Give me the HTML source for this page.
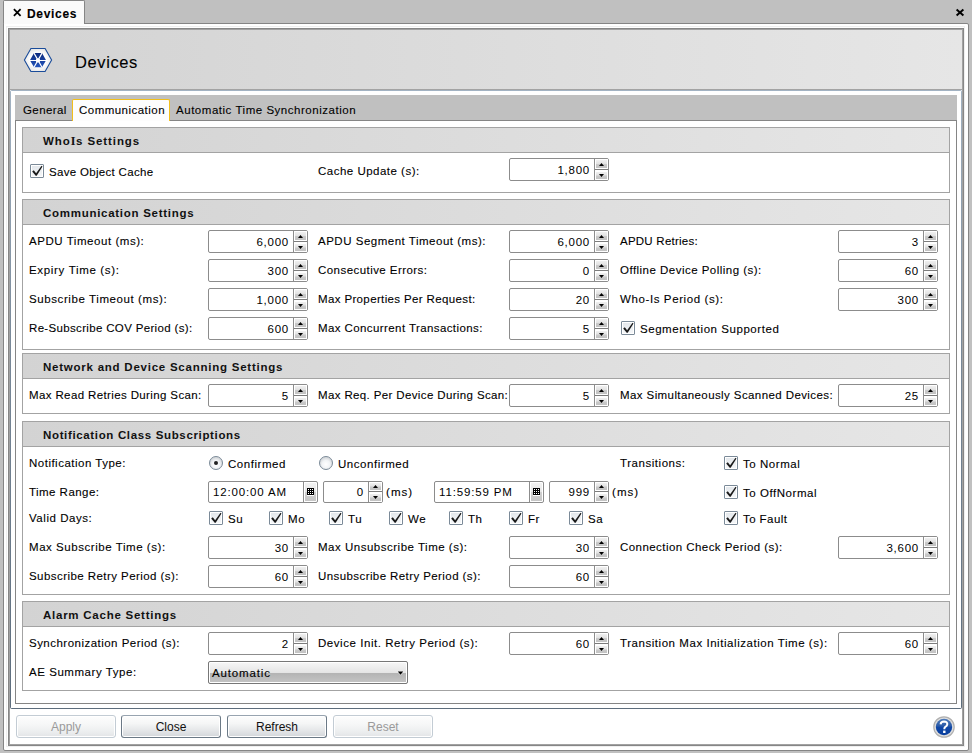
<!DOCTYPE html><html><head><meta charset="utf-8"><style>
*{box-sizing:content-box}
html,body{margin:0;padding:0}
body{width:972px;height:753px;overflow:hidden;background:#c0c0c0;position:relative;font-family:"Liberation Sans",sans-serif;font-size:12px;color:#000}
div,svg{position:absolute}
.lbl{white-space:nowrap;line-height:14px;letter-spacing:0.55px;font-size:11.5px;-webkit-text-stroke:0.1px #000}
.doctab{left:3px;top:0;width:80px;height:24px;background:#f9f9f9;border:1px solid #858585;border-bottom:none;border-radius:2px 2px 0 0}
.frame{left:3px;top:23px;width:964px;height:726px;border:1px solid #858585;background:#fff;border-radius:0 2px 2px 2px}
.frame2{left:8px;top:28px;width:954px;height:716px;border:1px solid #868686;box-shadow:inset 0 0 0 1px #a2a2a2;background:#fff}
.hdr{left:10px;top:30px;width:952px;height:59px;background:linear-gradient(to right,#d3d3d3,#e6e6e6);border-bottom:1px solid #a3a3a3}
.tabctl{left:10px;top:90px;width:952px;height:619px;border-radius:2px;background:linear-gradient(#a3b3c3,#7a8a9a 40%,#5d6d7d)}
.tabctl:after{content:'';position:absolute;left:1px;top:1px;width:950px;height:617px;background:#fff}
.tabstrip{left:15px;top:95px;width:942px;height:25px;background:#c0c0c0}
.tabsel{left:72px;top:99px;width:96px;height:21px;background:#fdfdfd;border:1px solid #f2bf1a;border-bottom:none;border-radius:2px 2px 0 0}
.page{left:15px;top:120px;width:940px;height:582px;border:1px solid #858585;background:#fff}
.grp{left:22px;width:926px;border:1px solid #a3a3a3;background:#fff}
.gh{left:0;top:0;width:926px;height:24px;border-bottom:1px solid #a3a3a3;background:linear-gradient(to right,#d3d3d3,#e6e6e6)}
.gh span{position:absolute;left:20px;top:6px;line-height:14px;font-weight:bold;font-size:11.5px;letter-spacing:0.6px;color:#111;white-space:nowrap}
.spin{height:21px;border:1px solid #8c8c8c;border-radius:2px;background:#fff}
.sv{left:0;top:4px;text-align:right;line-height:14px;letter-spacing:0.75px;font-size:11.5px}
.sdiv{top:0;width:1px;height:21px;background:#8c8c8c}
.sup,.sdn{width:11px;height:8px;border:1px solid #fff;background:linear-gradient(#f0f0f0 0,#e2e2e2 48%,#cacaca 52%,#c2c2c2 100%)}
.sup{top:1px}.sdn{top:12px;height:7px}
.ssep{top:10px;width:13px;height:1px;background:#7c7c7c}
.sup i,.sdn i{position:absolute;left:3px;width:0;height:0;border-left:2.5px solid transparent;border-right:2.5px solid transparent}
.sup i{top:2px;border-bottom:3px solid #000}
.sdn i{top:2px;border-top:3px solid #000}
.chk{width:12px;height:12px;border:1px solid #7b8a98;border-radius:1px;background:#fff}
.chk:before{content:"";position:absolute;left:1px;top:1px;width:10px;height:10px;background:linear-gradient(#e4e8ec,#f4f6f8)}
.chk svg{left:-1px;top:-1px}
.rad{position:absolute}
.tp{width:108px;height:20px;border:1px solid #8c8c8c;border-radius:2px;background:#fff}
.tv{left:4px;top:3px;line-height:14px;letter-spacing:0.85px;white-space:nowrap;font-size:11.5px}
.tdiv{left:94px;top:0;width:1px;height:20px;background:#8c8c8c}
.tbtn{left:96px;top:1px;width:11px;height:18px;background:linear-gradient(#f2f2f2 0,#e6e6e6 50%,#cfcfcf 50%,#c6c6c6 100%)}
.cal{left:2px;top:5px;width:7px;height:8px;background:#fff}
.cal svg{left:0;top:0}
.btn{top:715px;width:98px;height:21px;border:1px solid #6b7986;border-top-color:#98a4b0;border-radius:3px;background:linear-gradient(#fdfdfd 0,#f5f6f6 35%,#e4e6e8 70%,#d3d6da 100%);box-shadow:inset 0 0 0 1px #fff;text-align:center;line-height:23px;color:#111;letter-spacing:0}
.btn.dis{border-color:#c3ccd4;color:#9a9a9a;background:linear-gradient(#fdfdfd 0,#f6f7f7 40%,#eceeef 75%,#e2e4e7 100%)}
.dd{left:208px;top:661px;width:198px;height:21px;border:1px solid #777;border-radius:2px;background:linear-gradient(#f7f7f7 0,#e5e5e5 50%,#b3b3b3 52%,#c5c5c5 100%);box-shadow:inset 0 0 0 1px #fff}
</style></head><body>

<div class="doctab"></div>
<div class="frame"></div>
<div style="left:6px;top:26px;width:957px;height:719px;border:1px solid #efefef"></div>
<div style="left:4px;top:1px;width:80px;height:23px;background:#fafafa;border-radius:1px 1px 0 0"></div>
<svg style="left:13px;top:8px" width="9" height="9" viewBox="0 0 9 9"><path d="M0.9 1.1 L7.6 7.9 M7.6 1.1 L0.9 7.9" stroke="#000" stroke-width="1.75"/></svg>
<div class="lbl" style="left:27px;top:7px;font-weight:bold;font-size:12px;letter-spacing:0.68px;">Devices</div>
<svg style="left:955px;top:8px" width="10" height="9" viewBox="0 0 10 9"><path d="M1.6 1.6 L8.4 7.4 M8.4 1.6 L1.6 7.4" stroke="#000" stroke-width="2"/></svg>
<div class="frame2"></div>
<div class="hdr"></div>
<svg style="left:22px;top:46px" width="32" height="28" viewBox="0 0 32 28">
<defs><linearGradient id="ig" x1="0" y1="0" x2="0" y2="1"><stop offset="0" stop-color="#0b2a7e"/><stop offset="1" stop-color="#2556bd"/></linearGradient>
<radialGradient id="sh" cx="50%" cy="50%" r="50%"><stop offset="0.6" stop-color="#fff"/><stop offset="1" stop-color="#e8e8e8"/></radialGradient></defs>
<polygon points="2.4,14 8.9,2.5 23.1,2.5 29.6,14 23.1,25.5 8.9,25.5" fill="url(#sh)" stroke="#1a4c9a" stroke-width="1.1"/>
<polygon points="7.9,14.3 12,7.1 20,7.1 24.1,14.3 20,21.3 12,21.3" fill="url(#ig)"/>
<path d="M12 7.1 L20 21.3 M20 7.1 L12 21.3" stroke="#fff" stroke-width="1.2"/><rect x="7" y="14" width="18" height="1" fill="#fff"/>
<circle cx="16" cy="14.4" r="2.2" fill="#fff"/>
</svg>
<div class="lbl" style="left:75px;top:53px;font-size:16.5px;line-height:18px;letter-spacing:0.6px">Devices</div>
<div class="tabctl"></div>
<div class="tabstrip"></div>
<div class="page"></div>
<div class="tabsel"></div>
<div class="lbl" style="left:23px;top:103px;;letter-spacing:0.407px;">General</div>
<div class="lbl" style="left:79px;top:103px;;letter-spacing:0.473px;">Communication</div>
<div class="lbl" style="left:176px;top:103px;letter-spacing:0.53px;letter-spacing:0.53px;">Automatic Time Synchronization</div>
<div class="grp" style="top:127px;height:64px"><div class="gh"><span style="letter-spacing:0.92px">Who<span style="position:static;font-family:Liberation Serif;font-size:12px">I</span>s Settings</span></div></div>
<div class="grp" style="top:199px;height:149px"><div class="gh"><span style="letter-spacing:0.72px">Communication Settings</span></div></div>
<div class="grp" style="top:353px;height:59px"><div class="gh"><span style="letter-spacing:0.76px">Network and Device Scanning Settings</span></div></div>
<div class="grp" style="top:421px;height:172px"><div class="gh"><span style="letter-spacing:0.65px">Notification Class Subscriptions</span></div></div>
<div class="grp" style="top:601px;height:88px"><div class="gh"><span style="letter-spacing:0.75px">Alarm Cache Settings</span></div></div>
<div class="chk" style="left:30px;top:164px"><svg width="14" height="14" viewBox="0 0 14 14"><polygon points="2.2,7.4 3.8,6.3 6.1,9.2 11.6,1.8 12.5,2.4 6.7,11.7 5.7,11.7" fill="#1a1a1a"/></svg></div>
<div class="lbl" style="left:49px;top:165px;;letter-spacing:0.315px;">Save Object Cache</div>
<div class="lbl" style="left:318px;top:164px;;letter-spacing:0.491px;">Cache Update (s):</div>
<div class="spin" style="left:509px;top:158px;width:98px;height:21px"><div class="sv" style="width:80px;top:4px">1,800</div><div class="sdiv" style="left:84px;height:21px"></div><div class="sup" style="left:85px;top:0px;height:8px"><svg style="left:3px;top:3px" width="5" height="3"><polygon points="0,3 2.5,0 5,3" fill="#000"/></svg></div><div class="ssep" style="left:85px;top:10px"></div><div class="sdn" style="left:85px;top:12px;height:7px"><svg style="left:3px;top:2px" width="5" height="3"><polygon points="0,0 5,0 2.5,3" fill="#000"/></svg></div></div>
<div class="lbl" style="left:29px;top:234px;;">APDU Timeout (ms):</div>
<div class="spin" style="left:208px;top:230px;width:98px;height:21px"><div class="sv" style="width:80px;top:4px">6,000</div><div class="sdiv" style="left:84px;height:21px"></div><div class="sup" style="left:85px;top:0px;height:8px"><svg style="left:3px;top:3px" width="5" height="3"><polygon points="0,3 2.5,0 5,3" fill="#000"/></svg></div><div class="ssep" style="left:85px;top:10px"></div><div class="sdn" style="left:85px;top:12px;height:7px"><svg style="left:3px;top:2px" width="5" height="3"><polygon points="0,0 5,0 2.5,3" fill="#000"/></svg></div></div>
<div class="lbl" style="left:318px;top:234px;;letter-spacing:0.512px;">APDU Segment Timeout (ms):</div>
<div class="spin" style="left:509px;top:230px;width:98px;height:21px"><div class="sv" style="width:80px;top:4px">6,000</div><div class="sdiv" style="left:84px;height:21px"></div><div class="sup" style="left:85px;top:0px;height:8px"><svg style="left:3px;top:3px" width="5" height="3"><polygon points="0,3 2.5,0 5,3" fill="#000"/></svg></div><div class="ssep" style="left:85px;top:10px"></div><div class="sdn" style="left:85px;top:12px;height:7px"><svg style="left:3px;top:2px" width="5" height="3"><polygon points="0,0 5,0 2.5,3" fill="#000"/></svg></div></div>
<div class="lbl" style="left:620px;top:234px;;letter-spacing:0.242px;">APDU Retries:</div>
<div class="spin" style="left:838px;top:230px;width:98px;height:21px"><div class="sv" style="width:80px;top:4px">3</div><div class="sdiv" style="left:84px;height:21px"></div><div class="sup" style="left:85px;top:0px;height:8px"><svg style="left:3px;top:3px" width="5" height="3"><polygon points="0,3 2.5,0 5,3" fill="#000"/></svg></div><div class="ssep" style="left:85px;top:10px"></div><div class="sdn" style="left:85px;top:12px;height:7px"><svg style="left:3px;top:2px" width="5" height="3"><polygon points="0,0 5,0 2.5,3" fill="#000"/></svg></div></div>
<div class="lbl" style="left:29px;top:263px;;letter-spacing:0.675px;">Expiry Time (s):</div>
<div class="spin" style="left:208px;top:259px;width:98px;height:21px"><div class="sv" style="width:80px;top:4px">300</div><div class="sdiv" style="left:84px;height:21px"></div><div class="sup" style="left:85px;top:0px;height:8px"><svg style="left:3px;top:3px" width="5" height="3"><polygon points="0,3 2.5,0 5,3" fill="#000"/></svg></div><div class="ssep" style="left:85px;top:10px"></div><div class="sdn" style="left:85px;top:12px;height:7px"><svg style="left:3px;top:2px" width="5" height="3"><polygon points="0,0 5,0 2.5,3" fill="#000"/></svg></div></div>
<div class="lbl" style="left:318px;top:263px;;letter-spacing:0.445px;">Consecutive Errors:</div>
<div class="spin" style="left:509px;top:259px;width:98px;height:21px"><div class="sv" style="width:80px;top:4px">0</div><div class="sdiv" style="left:84px;height:21px"></div><div class="sup" style="left:85px;top:0px;height:8px"><svg style="left:3px;top:3px" width="5" height="3"><polygon points="0,3 2.5,0 5,3" fill="#000"/></svg></div><div class="ssep" style="left:85px;top:10px"></div><div class="sdn" style="left:85px;top:12px;height:7px"><svg style="left:3px;top:2px" width="5" height="3"><polygon points="0,0 5,0 2.5,3" fill="#000"/></svg></div></div>
<div class="lbl" style="left:620px;top:263px;;letter-spacing:0.476px;">Offline Device Polling (s):</div>
<div class="spin" style="left:838px;top:259px;width:98px;height:21px"><div class="sv" style="width:80px;top:4px">60</div><div class="sdiv" style="left:84px;height:21px"></div><div class="sup" style="left:85px;top:0px;height:8px"><svg style="left:3px;top:3px" width="5" height="3"><polygon points="0,3 2.5,0 5,3" fill="#000"/></svg></div><div class="ssep" style="left:85px;top:10px"></div><div class="sdn" style="left:85px;top:12px;height:7px"><svg style="left:3px;top:2px" width="5" height="3"><polygon points="0,0 5,0 2.5,3" fill="#000"/></svg></div></div>
<div class="lbl" style="left:29px;top:292px;;letter-spacing:0.593px;">Subscribe Timeout (ms):</div>
<div class="spin" style="left:208px;top:288px;width:98px;height:21px"><div class="sv" style="width:80px;top:4px">1,000</div><div class="sdiv" style="left:84px;height:21px"></div><div class="sup" style="left:85px;top:0px;height:8px"><svg style="left:3px;top:3px" width="5" height="3"><polygon points="0,3 2.5,0 5,3" fill="#000"/></svg></div><div class="ssep" style="left:85px;top:10px"></div><div class="sdn" style="left:85px;top:12px;height:7px"><svg style="left:3px;top:2px" width="5" height="3"><polygon points="0,0 5,0 2.5,3" fill="#000"/></svg></div></div>
<div class="lbl" style="left:318px;top:292px;;letter-spacing:0.365px;">Max Properties Per Request:</div>
<div class="spin" style="left:509px;top:288px;width:98px;height:21px"><div class="sv" style="width:80px;top:4px">20</div><div class="sdiv" style="left:84px;height:21px"></div><div class="sup" style="left:85px;top:0px;height:8px"><svg style="left:3px;top:3px" width="5" height="3"><polygon points="0,3 2.5,0 5,3" fill="#000"/></svg></div><div class="ssep" style="left:85px;top:10px"></div><div class="sdn" style="left:85px;top:12px;height:7px"><svg style="left:3px;top:2px" width="5" height="3"><polygon points="0,0 5,0 2.5,3" fill="#000"/></svg></div></div>
<div class="lbl" style="left:620px;top:292px;;letter-spacing:0.606px;">Who-Is Period (s):</div>
<div class="spin" style="left:838px;top:288px;width:98px;height:21px"><div class="sv" style="width:80px;top:4px">300</div><div class="sdiv" style="left:84px;height:21px"></div><div class="sup" style="left:85px;top:0px;height:8px"><svg style="left:3px;top:3px" width="5" height="3"><polygon points="0,3 2.5,0 5,3" fill="#000"/></svg></div><div class="ssep" style="left:85px;top:10px"></div><div class="sdn" style="left:85px;top:12px;height:7px"><svg style="left:3px;top:2px" width="5" height="3"><polygon points="0,0 5,0 2.5,3" fill="#000"/></svg></div></div>
<div class="lbl" style="left:29px;top:321px;;letter-spacing:0.336px;">Re-Subscribe COV Period (s):</div>
<div class="spin" style="left:208px;top:317px;width:98px;height:21px"><div class="sv" style="width:80px;top:4px">600</div><div class="sdiv" style="left:84px;height:21px"></div><div class="sup" style="left:85px;top:0px;height:8px"><svg style="left:3px;top:3px" width="5" height="3"><polygon points="0,3 2.5,0 5,3" fill="#000"/></svg></div><div class="ssep" style="left:85px;top:10px"></div><div class="sdn" style="left:85px;top:12px;height:7px"><svg style="left:3px;top:2px" width="5" height="3"><polygon points="0,0 5,0 2.5,3" fill="#000"/></svg></div></div>
<div class="lbl" style="left:318px;top:321px;;letter-spacing:0.407px;">Max Concurrent Transactions:</div>
<div class="spin" style="left:509px;top:317px;width:98px;height:21px"><div class="sv" style="width:80px;top:4px">5</div><div class="sdiv" style="left:84px;height:21px"></div><div class="sup" style="left:85px;top:0px;height:8px"><svg style="left:3px;top:3px" width="5" height="3"><polygon points="0,3 2.5,0 5,3" fill="#000"/></svg></div><div class="ssep" style="left:85px;top:10px"></div><div class="sdn" style="left:85px;top:12px;height:7px"><svg style="left:3px;top:2px" width="5" height="3"><polygon points="0,0 5,0 2.5,3" fill="#000"/></svg></div></div>
<div class="chk" style="left:621px;top:321px"><svg width="14" height="14" viewBox="0 0 14 14"><polygon points="2.2,7.4 3.8,6.3 6.1,9.2 11.6,1.8 12.5,2.4 6.7,11.7 5.7,11.7" fill="#1a1a1a"/></svg></div>
<div class="lbl" style="left:640px;top:322px;;">Segmentation Supported</div>
<div class="lbl" style="left:29px;top:388px;;letter-spacing:0.378px;">Max Read Retries During Scan:</div>
<div class="spin" style="left:208px;top:384px;width:98px;height:21px"><div class="sv" style="width:80px;top:4px">5</div><div class="sdiv" style="left:84px;height:21px"></div><div class="sup" style="left:85px;top:0px;height:8px"><svg style="left:3px;top:3px" width="5" height="3"><polygon points="0,3 2.5,0 5,3" fill="#000"/></svg></div><div class="ssep" style="left:85px;top:10px"></div><div class="sdn" style="left:85px;top:12px;height:7px"><svg style="left:3px;top:2px" width="5" height="3"><polygon points="0,0 5,0 2.5,3" fill="#000"/></svg></div></div>
<div class="lbl" style="left:318px;top:388px;;letter-spacing:0.369px;">Max Req. Per Device During Scan:</div>
<div class="spin" style="left:509px;top:384px;width:98px;height:21px"><div class="sv" style="width:80px;top:4px">5</div><div class="sdiv" style="left:84px;height:21px"></div><div class="sup" style="left:85px;top:0px;height:8px"><svg style="left:3px;top:3px" width="5" height="3"><polygon points="0,3 2.5,0 5,3" fill="#000"/></svg></div><div class="ssep" style="left:85px;top:10px"></div><div class="sdn" style="left:85px;top:12px;height:7px"><svg style="left:3px;top:2px" width="5" height="3"><polygon points="0,0 5,0 2.5,3" fill="#000"/></svg></div></div>
<div class="lbl" style="left:620px;top:388px;letter-spacing:0.47px;letter-spacing:0.407px;">Max Simultaneously Scanned Devices:</div>
<div class="spin" style="left:838px;top:384px;width:98px;height:21px"><div class="sv" style="width:80px;top:4px">25</div><div class="sdiv" style="left:84px;height:21px"></div><div class="sup" style="left:85px;top:0px;height:8px"><svg style="left:3px;top:3px" width="5" height="3"><polygon points="0,3 2.5,0 5,3" fill="#000"/></svg></div><div class="ssep" style="left:85px;top:10px"></div><div class="sdn" style="left:85px;top:12px;height:7px"><svg style="left:3px;top:2px" width="5" height="3"><polygon points="0,0 5,0 2.5,3" fill="#000"/></svg></div></div>
<div class="lbl" style="left:29px;top:456px;;letter-spacing:0.494px;">Notification Type:</div>
<svg class="rad" style="left:209px;top:456px" width="15" height="15" viewBox="0 0 15 15"><defs><radialGradient id="rg209" cx="50%" cy="60%" r="50%"><stop offset="0" stop-color="#ffffff"/><stop offset="0.6" stop-color="#f2f4f6"/><stop offset="1" stop-color="#d6d9dc"/></radialGradient></defs><circle cx="7" cy="7" r="6.5" fill="url(#rg209)" stroke="#7b8a98" stroke-width="1"/><circle cx="7" cy="7" r="2" fill="#222"/></svg>
<div class="lbl" style="left:228px;top:457px;;">Confirmed</div>
<svg class="rad" style="left:319px;top:456px" width="15" height="15" viewBox="0 0 15 15"><defs><radialGradient id="rg319" cx="50%" cy="60%" r="50%"><stop offset="0" stop-color="#ffffff"/><stop offset="0.6" stop-color="#f2f4f6"/><stop offset="1" stop-color="#d6d9dc"/></radialGradient></defs><circle cx="7" cy="7" r="6.5" fill="url(#rg319)" stroke="#7b8a98" stroke-width="1"/></svg>
<div class="lbl" style="left:338px;top:457px;;">Unconfirmed</div>
<div class="lbl" style="left:620px;top:456px;;">Transitions:</div>
<div class="chk" style="left:724px;top:456px"><svg width="14" height="14" viewBox="0 0 14 14"><polygon points="2.2,7.4 3.8,6.3 6.1,9.2 11.6,1.8 12.5,2.4 6.7,11.7 5.7,11.7" fill="#1a1a1a"/></svg></div>
<div class="lbl" style="left:743px;top:457px;;">To Normal</div>
<div class="lbl" style="left:29px;top:485px;;letter-spacing:0.459px;">Time Range:</div>
<div class="tp" style="left:208px;top:481px"><div class="tv">12:00:00 AM</div><div class="tdiv"></div><div class="tbtn"><div class="cal"><svg width="7" height="7" viewBox="0 0 7 7"><rect width="7" height="7" fill="#000"/><rect x="1" y="1" width="1" height="1" fill="#fff"/><rect x="1" y="3" width="1" height="1" fill="#fff"/><rect x="1" y="5" width="1" height="1" fill="#fff"/><rect x="3" y="1" width="1" height="1" fill="#fff"/><rect x="3" y="3" width="1" height="1" fill="#fff"/><rect x="3" y="5" width="1" height="1" fill="#fff"/><rect x="5" y="1" width="1" height="1" fill="#fff"/><rect x="5" y="3" width="1" height="1" fill="#fff"/><rect x="5" y="5" width="1" height="1" fill="#fff"/></svg></div></div></div>
<div class="spin" style="left:323px;top:481px;width:58px;height:20px"><div class="sv" style="width:40px;top:3px">0</div><div class="sdiv" style="left:44px;height:20px"></div><div class="sup" style="left:45px;top:0px;height:7px"><svg style="left:3px;top:2px" width="5" height="3"><polygon points="0,3 2.5,0 5,3" fill="#000"/></svg></div><div class="ssep" style="left:45px;top:9px"></div><div class="sdn" style="left:45px;top:11px;height:7px"><svg style="left:3px;top:2px" width="5" height="3"><polygon points="0,0 5,0 2.5,3" fill="#000"/></svg></div></div>
<div class="lbl" style="left:386px;top:485px;;letter-spacing:1.05px;">(ms)</div>
<div class="tp" style="left:434px;top:481px"><div class="tv">11:59:59 PM</div><div class="tdiv"></div><div class="tbtn"><div class="cal"><svg width="7" height="7" viewBox="0 0 7 7"><rect width="7" height="7" fill="#000"/><rect x="1" y="1" width="1" height="1" fill="#fff"/><rect x="1" y="3" width="1" height="1" fill="#fff"/><rect x="1" y="5" width="1" height="1" fill="#fff"/><rect x="3" y="1" width="1" height="1" fill="#fff"/><rect x="3" y="3" width="1" height="1" fill="#fff"/><rect x="3" y="5" width="1" height="1" fill="#fff"/><rect x="5" y="1" width="1" height="1" fill="#fff"/><rect x="5" y="3" width="1" height="1" fill="#fff"/><rect x="5" y="5" width="1" height="1" fill="#fff"/></svg></div></div></div>
<div class="spin" style="left:549px;top:481px;width:58px;height:20px"><div class="sv" style="width:40px;top:3px">999</div><div class="sdiv" style="left:44px;height:20px"></div><div class="sup" style="left:45px;top:0px;height:7px"><svg style="left:3px;top:2px" width="5" height="3"><polygon points="0,3 2.5,0 5,3" fill="#000"/></svg></div><div class="ssep" style="left:45px;top:9px"></div><div class="sdn" style="left:45px;top:11px;height:7px"><svg style="left:3px;top:2px" width="5" height="3"><polygon points="0,0 5,0 2.5,3" fill="#000"/></svg></div></div>
<div class="lbl" style="left:612px;top:485px;;letter-spacing:1.05px;">(ms)</div>
<div class="chk" style="left:724px;top:485px"><svg width="14" height="14" viewBox="0 0 14 14"><polygon points="2.2,7.4 3.8,6.3 6.1,9.2 11.6,1.8 12.5,2.4 6.7,11.7 5.7,11.7" fill="#1a1a1a"/></svg></div>
<div class="lbl" style="left:743px;top:486px;;">To OffNormal</div>
<div class="lbl" style="left:29px;top:511px;;">Valid Days:</div>
<div class="chk" style="left:209px;top:511px"><svg width="14" height="14" viewBox="0 0 14 14"><polygon points="2.2,7.4 3.8,6.3 6.1,9.2 11.6,1.8 12.5,2.4 6.7,11.7 5.7,11.7" fill="#1a1a1a"/></svg></div>
<div class="lbl" style="left:228px;top:512px;;">Su</div>
<div class="chk" style="left:269px;top:511px"><svg width="14" height="14" viewBox="0 0 14 14"><polygon points="2.2,7.4 3.8,6.3 6.1,9.2 11.6,1.8 12.5,2.4 6.7,11.7 5.7,11.7" fill="#1a1a1a"/></svg></div>
<div class="lbl" style="left:288px;top:512px;;">Mo</div>
<div class="chk" style="left:329px;top:511px"><svg width="14" height="14" viewBox="0 0 14 14"><polygon points="2.2,7.4 3.8,6.3 6.1,9.2 11.6,1.8 12.5,2.4 6.7,11.7 5.7,11.7" fill="#1a1a1a"/></svg></div>
<div class="lbl" style="left:348px;top:512px;;">Tu</div>
<div class="chk" style="left:389px;top:511px"><svg width="14" height="14" viewBox="0 0 14 14"><polygon points="2.2,7.4 3.8,6.3 6.1,9.2 11.6,1.8 12.5,2.4 6.7,11.7 5.7,11.7" fill="#1a1a1a"/></svg></div>
<div class="lbl" style="left:408px;top:512px;;">We</div>
<div class="chk" style="left:449px;top:511px"><svg width="14" height="14" viewBox="0 0 14 14"><polygon points="2.2,7.4 3.8,6.3 6.1,9.2 11.6,1.8 12.5,2.4 6.7,11.7 5.7,11.7" fill="#1a1a1a"/></svg></div>
<div class="lbl" style="left:468px;top:512px;;">Th</div>
<div class="chk" style="left:509px;top:511px"><svg width="14" height="14" viewBox="0 0 14 14"><polygon points="2.2,7.4 3.8,6.3 6.1,9.2 11.6,1.8 12.5,2.4 6.7,11.7 5.7,11.7" fill="#1a1a1a"/></svg></div>
<div class="lbl" style="left:528px;top:512px;;">Fr</div>
<div class="chk" style="left:569px;top:511px"><svg width="14" height="14" viewBox="0 0 14 14"><polygon points="2.2,7.4 3.8,6.3 6.1,9.2 11.6,1.8 12.5,2.4 6.7,11.7 5.7,11.7" fill="#1a1a1a"/></svg></div>
<div class="lbl" style="left:588px;top:512px;;">Sa</div>
<div class="chk" style="left:724px;top:511px"><svg width="14" height="14" viewBox="0 0 14 14"><polygon points="2.2,7.4 3.8,6.3 6.1,9.2 11.6,1.8 12.5,2.4 6.7,11.7 5.7,11.7" fill="#1a1a1a"/></svg></div>
<div class="lbl" style="left:743px;top:512px;;letter-spacing:0.425px;">To Fault</div>
<div class="lbl" style="left:29px;top:540px;;">Max Subscribe Time (s):</div>
<div class="spin" style="left:208px;top:536px;width:98px;height:21px"><div class="sv" style="width:80px;top:4px">30</div><div class="sdiv" style="left:84px;height:21px"></div><div class="sup" style="left:85px;top:0px;height:8px"><svg style="left:3px;top:3px" width="5" height="3"><polygon points="0,3 2.5,0 5,3" fill="#000"/></svg></div><div class="ssep" style="left:85px;top:10px"></div><div class="sdn" style="left:85px;top:12px;height:7px"><svg style="left:3px;top:2px" width="5" height="3"><polygon points="0,0 5,0 2.5,3" fill="#000"/></svg></div></div>
<div class="lbl" style="left:318px;top:540px;;letter-spacing:0.51px;">Max Unsubscribe Time (s):</div>
<div class="spin" style="left:509px;top:536px;width:98px;height:21px"><div class="sv" style="width:80px;top:4px">30</div><div class="sdiv" style="left:84px;height:21px"></div><div class="sup" style="left:85px;top:0px;height:8px"><svg style="left:3px;top:3px" width="5" height="3"><polygon points="0,3 2.5,0 5,3" fill="#000"/></svg></div><div class="ssep" style="left:85px;top:10px"></div><div class="sdn" style="left:85px;top:12px;height:7px"><svg style="left:3px;top:2px" width="5" height="3"><polygon points="0,0 5,0 2.5,3" fill="#000"/></svg></div></div>
<div class="lbl" style="left:620px;top:540px;;letter-spacing:0.443px;">Connection Check Period (s):</div>
<div class="spin" style="left:838px;top:536px;width:98px;height:21px"><div class="sv" style="width:80px;top:4px">3,600</div><div class="sdiv" style="left:84px;height:21px"></div><div class="sup" style="left:85px;top:0px;height:8px"><svg style="left:3px;top:3px" width="5" height="3"><polygon points="0,3 2.5,0 5,3" fill="#000"/></svg></div><div class="ssep" style="left:85px;top:10px"></div><div class="sdn" style="left:85px;top:12px;height:7px"><svg style="left:3px;top:2px" width="5" height="3"><polygon points="0,0 5,0 2.5,3" fill="#000"/></svg></div></div>
<div class="lbl" style="left:29px;top:569px;;letter-spacing:0.439px;">Subscribe Retry Period (s):</div>
<div class="spin" style="left:208px;top:565px;width:98px;height:21px"><div class="sv" style="width:80px;top:4px">60</div><div class="sdiv" style="left:84px;height:21px"></div><div class="sup" style="left:85px;top:0px;height:8px"><svg style="left:3px;top:3px" width="5" height="3"><polygon points="0,3 2.5,0 5,3" fill="#000"/></svg></div><div class="ssep" style="left:85px;top:10px"></div><div class="sdn" style="left:85px;top:12px;height:7px"><svg style="left:3px;top:2px" width="5" height="3"><polygon points="0,0 5,0 2.5,3" fill="#000"/></svg></div></div>
<div class="lbl" style="left:318px;top:569px;;letter-spacing:0.413px;">Unsubscribe Retry Period (s):</div>
<div class="spin" style="left:509px;top:565px;width:98px;height:21px"><div class="sv" style="width:80px;top:4px">60</div><div class="sdiv" style="left:84px;height:21px"></div><div class="sup" style="left:85px;top:0px;height:8px"><svg style="left:3px;top:3px" width="5" height="3"><polygon points="0,3 2.5,0 5,3" fill="#000"/></svg></div><div class="ssep" style="left:85px;top:10px"></div><div class="sdn" style="left:85px;top:12px;height:7px"><svg style="left:3px;top:2px" width="5" height="3"><polygon points="0,0 5,0 2.5,3" fill="#000"/></svg></div></div>
<div class="lbl" style="left:29px;top:636px;;letter-spacing:0.476px;">Synchronization Period (s):</div>
<div class="spin" style="left:208px;top:632px;width:98px;height:21px"><div class="sv" style="width:80px;top:4px">2</div><div class="sdiv" style="left:84px;height:21px"></div><div class="sup" style="left:85px;top:0px;height:8px"><svg style="left:3px;top:3px" width="5" height="3"><polygon points="0,3 2.5,0 5,3" fill="#000"/></svg></div><div class="ssep" style="left:85px;top:10px"></div><div class="sdn" style="left:85px;top:12px;height:7px"><svg style="left:3px;top:2px" width="5" height="3"><polygon points="0,0 5,0 2.5,3" fill="#000"/></svg></div></div>
<div class="lbl" style="left:318px;top:636px;;">Device Init. Retry Period (s):</div>
<div class="spin" style="left:509px;top:632px;width:98px;height:21px"><div class="sv" style="width:80px;top:4px">60</div><div class="sdiv" style="left:84px;height:21px"></div><div class="sup" style="left:85px;top:0px;height:8px"><svg style="left:3px;top:3px" width="5" height="3"><polygon points="0,3 2.5,0 5,3" fill="#000"/></svg></div><div class="ssep" style="left:85px;top:10px"></div><div class="sdn" style="left:85px;top:12px;height:7px"><svg style="left:3px;top:2px" width="5" height="3"><polygon points="0,0 5,0 2.5,3" fill="#000"/></svg></div></div>
<div class="lbl" style="left:620px;top:636px;;">Transition Max Initialization Time (s):</div>
<div class="spin" style="left:838px;top:632px;width:98px;height:21px"><div class="sv" style="width:80px;top:4px">60</div><div class="sdiv" style="left:84px;height:21px"></div><div class="sup" style="left:85px;top:0px;height:8px"><svg style="left:3px;top:3px" width="5" height="3"><polygon points="0,3 2.5,0 5,3" fill="#000"/></svg></div><div class="ssep" style="left:85px;top:10px"></div><div class="sdn" style="left:85px;top:12px;height:7px"><svg style="left:3px;top:2px" width="5" height="3"><polygon points="0,0 5,0 2.5,3" fill="#000"/></svg></div></div>
<div class="lbl" style="left:29px;top:665px;;">AE Summary Type:</div>
<div class="dd"><div class="lbl" style="left:3px;top:4px;letter-spacing:0.85px">Automatic</div><svg style="left:188px;top:9px" width="7" height="5"><polygon points="0,0.5 7,0.5 3.5,4.5" fill="#fff" opacity="0.7"/><polygon points="0.8,0.5 6.2,0.5 3.5,3.7" fill="#000"/></svg></div>
<div class="btn dis" style="left:16px">Apply</div>
<div class="btn" style="left:121px">Close</div>
<div class="btn" style="left:227px">Refresh</div>
<div class="btn dis" style="left:333px">Reset</div>
<svg style="left:933px;top:716px" width="22" height="22" viewBox="0 0 22 22">
<defs><linearGradient id="hb" x1="0" y1="0" x2="0" y2="1"><stop offset="0" stop-color="#4a78b8"/><stop offset="0.45" stop-color="#2a5aa8"/><stop offset="0.5" stop-color="#0f47a6"/><stop offset="1" stop-color="#0a3f9e"/></linearGradient></defs>
<circle cx="11" cy="11" r="10.2" fill="#dedede" stroke="#b0b0b0" stroke-width="1.2"/>
<circle cx="11" cy="11" r="8.2" fill="url(#hb)"/>
<path d="M7.6 8.4 Q7.8 5.6 11 5.6 Q14.4 5.7 14.3 8.3 Q14.2 9.9 12.3 10.9 Q11.3 11.5 11.3 13.2" fill="none" stroke="#fff" stroke-width="2"/>
<rect x="10.1" y="14.6" width="2.4" height="2.4" fill="#fff"/>
</svg>
</body></html>
